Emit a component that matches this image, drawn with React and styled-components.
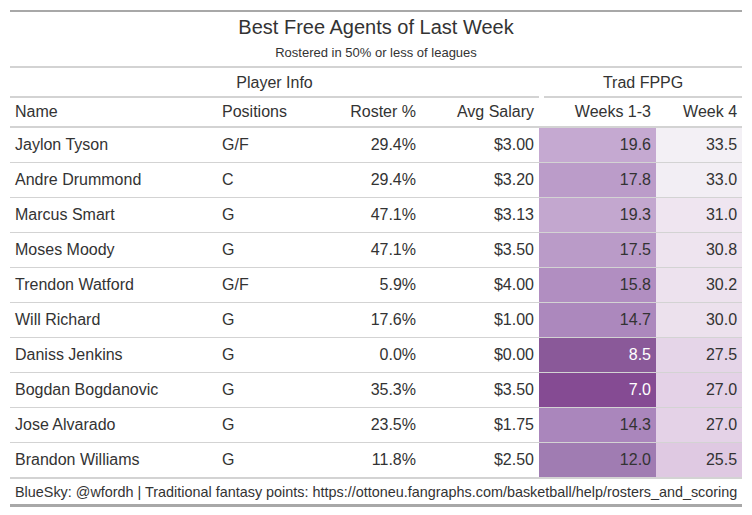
import React from "react";
import styled, { createGlobalStyle } from "styled-components";

const rows = [
  { name: "Jaylon Tyson", pos: "G/F", roster: "29.4%", salary: "$3.00", w13: "19.6", w4: "33.5", c13: "#c5a9d1", c4: "#f3f0f5" },
  { name: "Andre Drummond", pos: "C", roster: "29.4%", salary: "$3.20", w13: "17.8", w4: "33.0", c13: "#bb9cc9", c4: "#f2eef4" },
  { name: "Marcus Smart", pos: "G", roster: "47.1%", salary: "$3.13", w13: "19.3", w4: "31.0", c13: "#c3a7cf", c4: "#efe5f0" },
  { name: "Moses Moody", pos: "G", roster: "47.1%", salary: "$3.50", w13: "17.5", w4: "30.8", c13: "#ba9bc8", c4: "#eee4ef" },
  { name: "Trendon Watford", pos: "G/F", roster: "5.9%", salary: "$4.00", w13: "15.8", w4: "30.2", c13: "#b18ec1", c4: "#ede2ee" },
  { name: "Will Richard", pos: "G", roster: "17.6%", salary: "$1.00", w13: "14.7", w4: "30.0", c13: "#ac88bd", c4: "#ece1ed" },
  { name: "Daniss Jenkins", pos: "G", roster: "0.0%", salary: "$0.00", w13: "8.5", w4: "27.5", c13: "#8a5999", c4: "#e5d5e8", light: true },
  { name: "Bogdan Bogdanovic", pos: "G", roster: "35.3%", salary: "$3.50", w13: "7.0", w4: "27.0", c13: "#854b93", c4: "#e4d2e7", light: true },
  { name: "Jose Alvarado", pos: "G", roster: "23.5%", salary: "$1.75", w13: "14.3", w4: "27.0", c13: "#aa86bc", c4: "#e4d2e7" },
  { name: "Brandon Williams", pos: "G", roster: "11.8%", salary: "$2.50", w13: "12.0", w4: "25.5", c13: "#a07cb2", c4: "#dfc9e2" },
];

const GlobalStyle = createGlobalStyle`
  body {
    margin: 0;
    background: #ffffff;
    font-family: "Liberation Sans", Arial, sans-serif;
    color: #333333;
  }
`;

const Page = styled.div`
  padding: 10px;
`;

const Table = styled.table`
  width: 732px;
  border-collapse: collapse;
  table-layout: fixed;
  border-top: 2px solid #a8a8a8;
  border-bottom: 3px solid #a8a8a8;
  font-size: 16px;
`;

const Title = styled.th`
  font-size: 20px;
  font-weight: normal;
  text-align: center;
  padding: 3px 5px 0;
  height: 24px;
`;

const Subtitle = styled.th`
  font-size: 13px;
  font-weight: normal;
  text-align: center;
  padding: 6px 5px 6px;
  border-bottom: 2px solid #d3d3d3;
`;

const Spanner = styled.th`
  font-weight: normal;
  text-align: center;
  padding: ${(p) => (p.$gap ? "0 0 0 5px" : "0")};
  height: 28px;
  vertical-align: middle;
`;

const SpannerLabel = styled.div`
  border-bottom: 2px solid #d3d3d3;
  height: 26px;
  line-height: 26px;
  margin-top: 2px;
`;

const ColHead = styled.th`
  font-weight: normal;
  text-align: ${(p) => p.$align || "left"};
  padding: 0 5px;
  height: 28px;
  border-bottom: 2px solid #d3d3d3;
`;

const Row = styled.tr`
  border-top: 1px solid #d3d3d3;
  &:first-child {
    border-top: none;
  }
`;

const Cell = styled.td`
  text-align: ${(p) => p.$align || "left"};
  padding: 0 5px;
  height: 34px;
  background: ${(p) => p.$bg || "transparent"};
  color: ${(p) => (p.$light ? "#ffffff" : "#333333")};
  white-space: nowrap;
`;

const Footer = styled.td`
  font-size: 14.4px;
  padding: 0 5px;
  height: 25px;
  border-top: 2px solid #d3d3d3;
  white-space: nowrap;
`;

export default function App() {
  return (
    <>
      <GlobalStyle />
      <Page>
        <Table>
          <colgroup>
            <col style={{ width: 207 }} />
            <col style={{ width: 105 }} />
            <col style={{ width: 99 }} />
            <col style={{ width: 118 }} />
            <col style={{ width: 117 }} />
            <col style={{ width: 86 }} />
          </colgroup>
          <thead>
            <tr>
              <Title colSpan={6}>Best Free Agents of Last Week</Title>
            </tr>
            <tr>
              <Subtitle colSpan={6}>Rostered in 50% or less of leagues</Subtitle>
            </tr>
            <tr>
              <Spanner colSpan={4}>
                <SpannerLabel>Player Info</SpannerLabel>
              </Spanner>
              <Spanner colSpan={2} $gap>
                <SpannerLabel>Trad FPPG</SpannerLabel>
              </Spanner>
            </tr>
            <tr>
              <ColHead>Name</ColHead>
              <ColHead>Positions</ColHead>
              <ColHead $align="right">Roster %</ColHead>
              <ColHead $align="right">Avg Salary</ColHead>
              <ColHead $align="right">Weeks 1-3</ColHead>
              <ColHead $align="right">Week 4</ColHead>
            </tr>
          </thead>
          <tbody>
            {rows.map((r) => (
              <Row key={r.name}>
                <Cell>{r.name}</Cell>
                <Cell>{r.pos}</Cell>
                <Cell $align="right">{r.roster}</Cell>
                <Cell $align="right">{r.salary}</Cell>
                <Cell $align="right" $bg={r.c13} $light={r.light}>{r.w13}</Cell>
                <Cell $align="right" $bg={r.c4}>{r.w4}</Cell>
              </Row>
            ))}
          </tbody>
          <tfoot>
            <tr>
              <Footer colSpan={6}>
                BlueSky: @wfordh | Traditional fantasy points: https://ottoneu.fangraphs.com/basketball/help/rosters_and_scoring
              </Footer>
            </tr>
          </tfoot>
        </Table>
      </Page>
    </>
  );
}
